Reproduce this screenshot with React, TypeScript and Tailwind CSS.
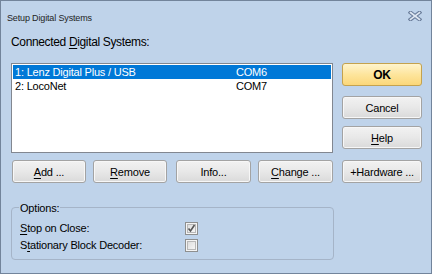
import React from "react";

const U = ({ children }: { children: React.ReactNode }) => (
  <span className="underline decoration-1 underline-offset-[2px]">{children}</span>
);

const Btn = ({ children, className = "" }: { children: React.ReactNode; className?: string }) => (
  <div
    className={
      "flex items-center justify-center h-[23px] rounded-[3px] border border-[#a3a3a3] bg-gradient-to-b from-[#f2f2f2] via-[#e8e8e8] to-[#dadada] shadow-[inset_0_0_0_1px_#f7f7f7] " +
      className
    }
  >
    {children}
  </div>
);

const Check = ({ checked }: { checked: boolean }) => (
  <svg width="13" height="13" viewBox="0 0 13 13">
    <defs>
      <linearGradient id={checked ? "g1" : "g2"} x1="0" y1="0" x2="1" y2="1">
        <stop offset="0" stopColor="#dcdcdc" />
        <stop offset="1" stopColor="#f7f7f7" />
      </linearGradient>
    </defs>
    <rect x="0.5" y="0.5" width="12" height="12" fill="#f4f4f4" stroke="#8e8f8f" />
    <rect x="2.5" y="2.5" width="8" height="8" fill={`url(#${checked ? "g1" : "g2"})`} stroke="#b8b8b8" />
    {checked && (
      <path d="M3.5 6.5 L5.5 9 L9.5 3" fill="none" stroke="#555" strokeWidth="1.6" />
    )}
  </svg>
);

export default function App() {
  return (
    <div className="w-[432px] h-[274px] bg-[#bfd3ea] border border-[#72849b] flex flex-col font-['Liberation_Sans',sans-serif] text-[11px] leading-[14px] text-black overflow-hidden tracking-[-0.2px]">
      {/* title bar */}
      <div className="h-[34px] flex items-start justify-between pl-[6px] pr-[9px] pt-[11px]">
        <span className="text-[9px] leading-[12px] text-[#1e1e1e] tracking-[-0.15px]">Setup Digital Systems</span>
        <svg width="14" height="10" viewBox="0 0 14 10" className="mt-[-1px]">
          <path d="M2.5 1.5 L11.5 8.5 M11.5 1.5 L2.5 8.5" stroke="#6a7d9b" strokeWidth="3.8" strokeLinecap="square" fill="none" />
          <path d="M2.5 1.5 L11.5 8.5 M11.5 1.5 L2.5 8.5" stroke="#dfe7f2" strokeWidth="1.6" strokeLinecap="square" fill="none" />
        </svg>
      </div>

      <div className="ml-[10px] text-[12px] leading-[14px] tracking-[-0.35px]">
        Connected <U>D</U>igital Systems:
      </div>

      <div className="flex mt-[14px] ml-[10px]">
        <div className="w-[322px] h-[90px] border border-[#828790] bg-white p-[1px]">
          <div className="flex h-[14px] items-center bg-[#0078d7] text-white">
            <span className="w-[223px] pl-[2px]">1: Lenz Digital Plus / USB</span>
            <span>COM6</span>
          </div>
          <div className="flex h-[14px] items-center">
            <span className="w-[223px] pl-[2px]">2: LocoNet</span>
            <span>COM7</span>
          </div>
        </div>
        <div className="ml-[9px] w-[80px] flex flex-col">
          <div className="flex items-center justify-center h-[23px] rounded-[3px] border border-[#c4a24e] bg-gradient-to-b from-[#fff4cc] via-[#fde59c] to-[#fbd779] font-bold text-[12px]">
            OK
          </div>
          <Btn className="mt-[10px] h-[21px]">Cancel</Btn>
          <Btn className="mt-[7px] h-[21px]">
            <U>H</U>elp
          </Btn>
        </div>
      </div>

      <div className="flex mt-[7px] ml-[11px]">
        <Btn className="w-[74px]">
          <U>A</U>dd ...
        </Btn>
        <Btn className="w-[74px] ml-[7px]">
          <U>R</U>emove
        </Btn>
        <Btn className="w-[75px] ml-[9px]">Info...</Btn>
        <Btn className="w-[75px] ml-[7px]">
          <U>C</U>hange ...
        </Btn>
        <Btn className="w-[80px] ml-[9px]">+Hardware ...</Btn>
      </div>

      <div className="relative ml-[10px] mt-[24px] w-[323px] h-[53px] border border-[#a5b4c8] rounded-[4px] pt-[12px] pl-[8px]">
        <span className="absolute left-[7px] top-[-7px] px-[1px] bg-[#bfd3ea]">Options:</span>
        <div className="flex items-center h-[16px]">
          <span className="w-[165px]">
            <U>S</U>top on Close:
          </span>
          <Check checked={true} />
        </div>
        <div className="flex items-center h-[16px] mt-[1px]">
          <span className="w-[165px]">
            S<U>t</U>ationary Block Decoder:
          </span>
          <Check checked={false} />
        </div>
      </div>
    </div>
  );
}
